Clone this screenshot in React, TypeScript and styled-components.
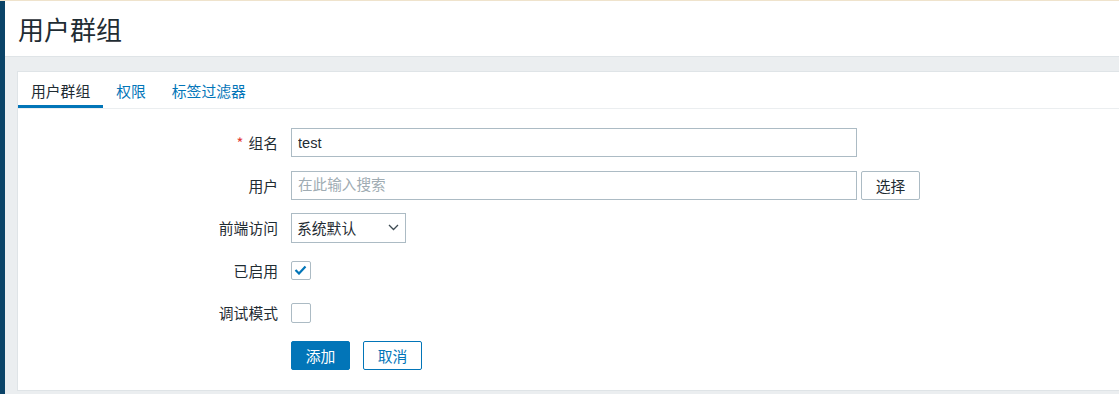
import React, { useState } from 'react';
import styled, { createGlobalStyle } from 'styled-components';

const GlobalStyle = createGlobalStyle`
  html, body {
    margin: 0;
    padding: 0;
    background: #ebeef0;
    font-family: "Liberation Sans", "Noto Sans CJK SC", sans-serif;
    color: #1f2c33;
  }
  * { box-sizing: border-box; }
`;

const Page = styled.div`
  display: flex;
  height: 394px;
  border-top: 1px solid #efe3cc;
  overflow: hidden;
`;

const Sidebar = styled.div`
  width: 5px;
  flex-shrink: 0;
  background: #0b4468;
`;

const Main = styled.div`
  flex: 1;
  display: flex;
  flex-direction: column;
  background: #ebeef0;
`;

const Header = styled.header`
  height: 56px;
  background: #fff;
  border-bottom: 1px solid #dfe4e7;
  display: flex;
  align-items: center;
  padding-left: 13px;
`;

const Title = styled.h1`
  margin: 0;
  font-size: 26px;
  font-weight: normal;
  color: #1f2c33;
  font-family: "Noto Sans CJK SC", sans-serif;
`;

const Card = styled.section`
  margin: 14px 0 0 12px;
  background: #fff;
  border: 1px solid #dfe4e7;
  border-right: none;
  height: 320px;
`;

const TabBar = styled.nav`
  display: flex;
  height: 37px;
  border-bottom: 1px solid #ebeef0;
`;

const Tab = styled.button<{ $active?: boolean }>`
  border: none;
  background: none;
  padding: 3px 13px 0;
  font-size: 14.8px;
  font-family: "Noto Sans CJK SC", sans-serif;
  color: ${p => (p.$active ? '#1f2c33' : '#0275b8')};
  border-bottom: 3px solid ${p => (p.$active ? '#0275b8' : 'transparent')};
  cursor: pointer;
`;

const Form = styled.div`
  display: grid;
  grid-template-columns: 260px 1fr;
  grid-auto-rows: 29px;
  row-gap: 13.6px;
  column-gap: 13px;
  padding-top: 19px;
`;

const Label = styled.label`
  justify-self: end;
  align-self: center;
  font-size: 14.8px;
  font-family: "Noto Sans CJK SC", sans-serif;
  color: #1f2c33;
`;

const Required = styled.span`
  color: #e33734;
  margin-right: 5px;
`;

const Field = styled.div`
  display: flex;
  align-items: center;
  gap: 4px;
`;

const TextInput = styled.input`
  width: 566px;
  height: 29px;
  border: 1px solid #acbbc4;
  padding: 0 6px;
  font-size: 14.6px;
  font-family: "Liberation Sans", "Noto Sans CJK SC", sans-serif;
  color: #1f2c33;
  outline: none;
  &::placeholder {
    color: #a0acb3;
    font-family: "Noto Sans CJK SC", sans-serif;
  }
`;

const Button = styled.button<{ $variant?: 'primary' | 'alt' | 'grey' }>`
  width: 59px;
  height: 29px;
  border-radius: 2px;
  font-size: 14.8px;
  font-family: "Noto Sans CJK SC", sans-serif;
  cursor: pointer;
  padding: 0;
  border: 1px solid
    ${p => (p.$variant === 'grey' ? '#acbbc4' : '#0275b8')};
  background: ${p => (p.$variant === 'primary' ? '#0275b8' : '#fff')};
  color: ${p =>
    p.$variant === 'primary' ? '#fff' : p.$variant === 'alt' ? '#0275b8' : '#1f2c33'};
`;

const Select = styled.div`
  width: 115px;
  height: 30px;
  border: 1px solid #acbbc4;
  display: flex;
  align-items: center;
  justify-content: space-between;
  padding: 0 6px 0 5px;
  font-size: 14.8px;
  font-family: "Noto Sans CJK SC", sans-serif;
  color: #1f2c33;
`;

const Check = styled.span<{ $on?: boolean }>`
  width: 19.5px;
  height: 19.5px;
  border: 1px solid #acbbc4;
  border-radius: 2px;
  display: inline-flex;
  align-items: center;
  justify-content: center;
  background: #fff;
  cursor: pointer;
`;

const Buttons = styled.div`
  grid-column: 2;
  display: flex;
  gap: 13px;
`;

const Chevron = () => (
  <svg width="11" height="7" viewBox="0 0 11 7">
    <path d="M1 1l4.5 4.5L10 1" fill="none" stroke="#3d4a52" strokeWidth="1.3" />
  </svg>
);

const Tick = () => (
  <svg width="13" height="10" viewBox="0 0 13 10">
    <path d="M1.5 5l3.5 3.5L11.5 1.5" fill="none" stroke="#0275b8" strokeWidth="2.2" />
  </svg>
);

const App: React.FC = () => {
  const [enabled, setEnabled] = useState(true);
  const [debug, setDebug] = useState(false);
  return (
    <>
      <GlobalStyle />
      <Page>
        <Sidebar />
        <Main>
          <Header>
            <Title>用户群组</Title>
          </Header>
          <Card>
            <TabBar>
              <Tab $active>用户群组</Tab>
              <Tab>权限</Tab>
              <Tab>标签过滤器</Tab>
            </TabBar>
            <Form>
              <Label>
                <Required>*</Required>组名
              </Label>
              <Field>
                <TextInput defaultValue="test" />
              </Field>

              <Label>用户</Label>
              <Field>
                <TextInput placeholder="在此输入搜索" />
                <Button $variant="grey">选择</Button>
              </Field>

              <Label>前端访问</Label>
              <Field>
                <Select>
                  系统默认
                  <Chevron />
                </Select>
              </Field>

              <Label>已启用</Label>
              <Field>
                <Check $on={enabled} onClick={() => setEnabled(!enabled)}>
                  {enabled && <Tick />}
                </Check>
              </Field>

              <Label>调试模式</Label>
              <Field>
                <Check $on={debug} onClick={() => setDebug(!debug)}>
                  {debug && <Tick />}
                </Check>
              </Field>

              <Buttons>
                <Button $variant="primary">添加</Button>
                <Button $variant="alt">取消</Button>
              </Buttons>
            </Form>
          </Card>
        </Main>
      </Page>
    </>
  );
};

export default App;
